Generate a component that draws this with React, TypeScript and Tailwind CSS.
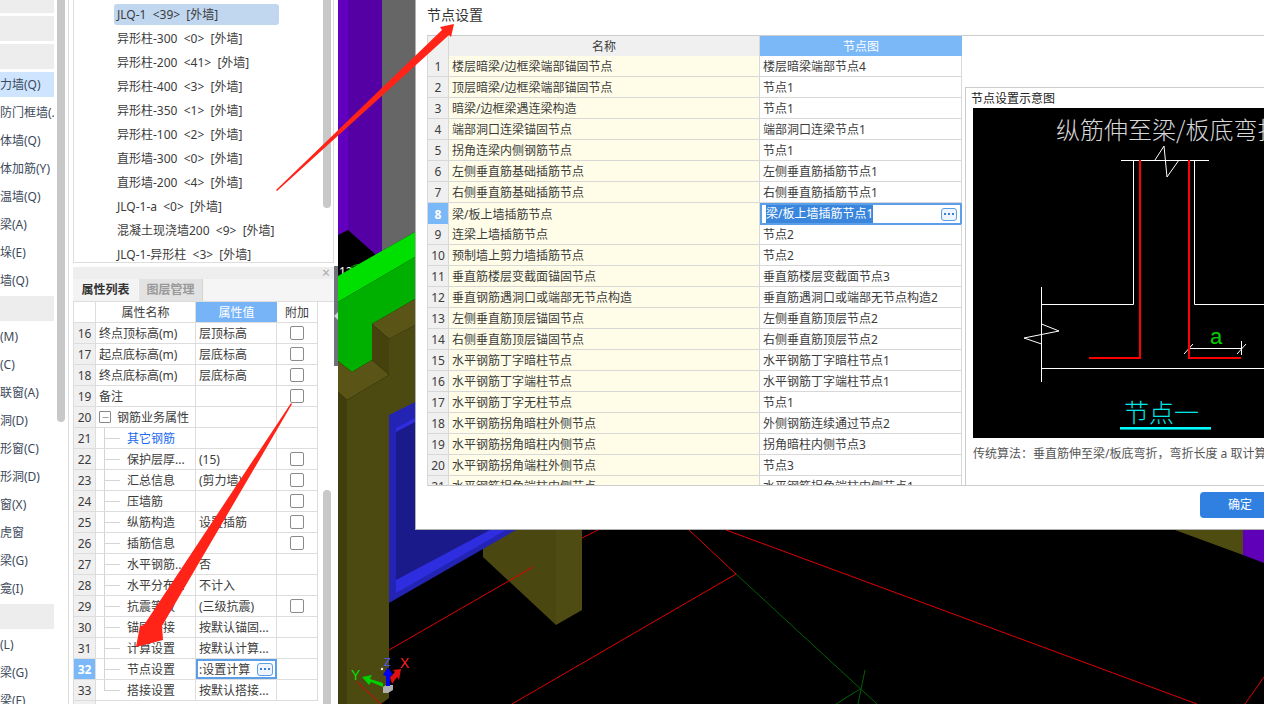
import { Minus } from "lucide-react"

const sideRows = [
  { head: true },
  { head: true },
  { head: true },
  { label: "剪力墙(Q)", active: true },
  { label: "人防门框墙(..." },
  { label: "砌体墙(Q)" },
  { label: "砌体加筋(Y)" },
  { label: "保温墙(Q)" },
  { label: "连梁(A)" },
  { label: "墙垛(E)" },
  { label: "幕墙(Q)" },
  { head: true },
  { label: "门(M)" },
  { label: "窗(C)" },
  { label: "门联窗(A)" },
  { label: "墙洞(D)" },
  { label: "带形窗(C)" },
  { label: "带形洞(D)" },
  { label: "飘窗(X)" },
  { label: "老虎窗" },
  { label: "过梁(G)" },
  { label: "壁龛(I)" },
  { head: true },
  { label: "梁(L)" },
  { label: "连梁(G)" },
  { label: "圈梁(F)" },
]

const wallRows = [
  "JLQ-1  <39>  [外墙]",
  "异形柱-300  <0>  [外墙]",
  "异形柱-200  <41>  [外墙]",
  "异形柱-400  <3>  [外墙]",
  "异形柱-350  <1>  [外墙]",
  "异形柱-100  <2>  [外墙]",
  "直形墙-300  <0>  [外墙]",
  "直形墙-200  <4>  [外墙]",
  "JLQ-1-a  <0>  [外墙]",
  "混凝土现浇墙200  <9>  [外墙]",
  "JLQ-1-异形柱  <3>  [外墙]",
]

// tree: 0 = top level, 1 = group row, 2 = child, 3 = last child
const propRows = [
  { no: 16, name: "终点顶标高(m)", value: "层顶标高", check: true, tree: 0 },
  { no: 17, name: "起点底标高(m)", value: "层底标高", check: true, tree: 0 },
  { no: 18, name: "终点底标高(m)", value: "层底标高", check: true, tree: 0 },
  { no: 19, name: "备注", value: "", check: true, tree: 0 },
  { no: 20, name: "钢筋业务属性", value: "", check: false, tree: 1 },
  { no: 21, name: "其它钢筋", value: "", check: false, tree: 2 },
  { no: 22, name: "保护层厚...", value: "(15)", check: true, tree: 2 },
  { no: 23, name: "汇总信息", value: "(剪力墙)", check: true, tree: 2 },
  { no: 24, name: "压墙筋", value: "", check: true, tree: 2 },
  { no: 25, name: "纵筋构造", value: "设置插筋", check: true, tree: 2 },
  { no: 26, name: "插筋信息", value: "", check: true, tree: 2 },
  { no: 27, name: "水平钢筋...", value: "否", check: false, tree: 2 },
  { no: 28, name: "水平分布...", value: "不计入", check: false, tree: 2 },
  { no: 29, name: "抗震等级", value: "(三级抗震)", check: true, tree: 2 },
  { no: 30, name: "锚固搭接", value: "按默认锚固...", check: false, tree: 2 },
  { no: 31, name: "计算设置", value: "按默认计算...", check: false, tree: 2 },
  { no: 32, name: "节点设置", value: "", check: false, tree: 2 },
  { no: 33, name: "搭接设置", value: "按默认搭接...", check: false, tree: 3 },
]

const nodeRows = [
  ["楼层暗梁/边框梁端部锚固节点", "楼层暗梁端部节点4"],
  ["顶层暗梁/边框梁端部锚固节点", "节点1"],
  ["暗梁/边框梁遇连梁构造", "节点1"],
  ["端部洞口连梁锚固节点", "端部洞口连梁节点1"],
  ["拐角连梁内侧钢筋节点", "节点1"],
  ["左侧垂直筋基础插筋节点", "左侧垂直筋插筋节点1"],
  ["右侧垂直筋基础插筋节点", "右侧垂直筋插筋节点1"],
  ["梁/板上墙插筋节点", "梁/板上墙插筋节点1"],
  ["连梁上墙插筋节点", "节点2"],
  ["预制墙上剪力墙插筋节点", "节点2"],
  ["垂直筋楼层变截面锚固节点", "垂直筋楼层变截面节点3"],
  ["垂直钢筋遇洞口或端部无节点构造", "垂直筋遇洞口或端部无节点构造2"],
  ["左侧垂直筋顶层锚固节点", "左侧垂直筋顶层节点2"],
  ["右侧垂直筋顶层锚固节点", "右侧垂直筋顶层节点2"],
  ["水平钢筋丁字暗柱节点", "水平钢筋丁字暗柱节点1"],
  ["水平钢筋丁字端柱节点", "水平钢筋丁字端柱节点1"],
  ["水平钢筋丁字无柱节点", "节点1"],
  ["水平钢筋拐角暗柱外侧节点", "外侧钢筋连续通过节点2"],
  ["水平钢筋拐角暗柱内侧节点", "拐角暗柱内侧节点3"],
  ["水平钢筋拐角端柱外侧节点", "节点3"],
  ["水平钢筋拐角端柱内侧节点", "水平钢筋拐角端柱内侧节点1"],
]

function DotsButton() {
  return (
    <span className="flex h-[13px] w-[16px] shrink-0 items-center justify-center gap-[2px] rounded-[3px] border border-[#5a9fe8] bg-[#eef5ff]">
      <i className="h-[2px] w-[2px] bg-[#3a80d0]" />
      <i className="h-[2px] w-[2px] bg-[#3a80d0]" />
      <i className="h-[2px] w-[2px] bg-[#3a80d0]" />
    </span>
  )
}

function Sidebar() {
  return (
    <div className="flex h-full w-[73px] shrink-0">
      <div className="-mt-[12px] w-[54px] shrink-0">
        {sideRows.map((row, i) => (
          <div
            key={i}
            className={`mb-[3px] flex h-[25px] items-center overflow-hidden whitespace-nowrap ${
              row.head ? "bg-[#ededed]" : row.active ? "bg-[#cfe5ff]" : ""
            }`}
          >
            {row.label && <span className="-ml-3 text-[#3d4a5c]">{row.label}</span>}
          </div>
        ))}
      </div>
      <div className="ml-[3px] h-[422px] w-[8px] shrink-0 rounded-b-[4px] bg-[#c8c8c8]" />
      <div className="ml-[3px] h-full w-px bg-[#dcdcdc]" />
    </div>
  )
}

function WallList() {
  return (
    <div className="flex h-[263px] justify-between overflow-hidden border border-t-0 border-[#dddddd] pt-[2px]">
      <div className="pl-[40px]">
        {wallRows.map((row, i) => (
          <div key={row} className="flex h-[24px] w-[165px] items-center">
            <span
              className={`flex h-[21px] w-full items-center whitespace-pre rounded-[3px] pl-[3px] pt-[2px] ${
                i === 0 ? "bg-[#c0d7ef]" : ""
              }`}
            >
              {row}
            </span>
          </div>
        ))}
      </div>
      <div className="mr-[2px] -mt-[2px] h-[208px] w-[8px] rounded-b-[4px] bg-[#c8c8c8]" />
    </div>
  )
}

function TreeCell({ name, tree }: { name: string; tree: number }) {
  if (tree === 0) return <span className="translate-y-px pl-[3px]">{name}</span>
  if (tree === 1) {
    return (
      <span className="flex h-full items-center pl-[3px]">
        <span className="flex h-[12px] w-[12px] items-center justify-center rounded-[1px] border border-[#888888]">
          <Minus size={9} strokeWidth={1.5} color="#555555" />
        </span>
        <span className="ml-[6px] translate-y-px">{name}</span>
      </span>
    )
  }
  return (
    <span className="flex h-full items-start pl-[8px]">
      {tree === 3 ? (
        <span className="h-[11px] w-[16px] border-b border-l border-[#d4d4d4]" />
      ) : (
        <span className="flex h-full w-[16px] items-center border-l border-[#d4d4d4]">
          <span className="h-px w-full bg-[#d4d4d4]" />
        </span>
      )}
      <span className={`ml-[7px] translate-y-px self-center ${name === "其它钢筋" ? "text-[#1a6af0]" : ""}`}>
        {name}
      </span>
    </span>
  )
}

function PropertyPanel() {
  return (
    <div className="mt-[4px] flex h-[437px] flex-col overflow-hidden bg-white">
      <div className="flex h-[12px] shrink-0 items-center justify-end bg-[#eeeeee] pr-[4px] text-[14px] leading-none text-[#aaaaaa]">
        ×
      </div>
      <div className="flex h-[23px] shrink-0 border-b border-[#dddddd] bg-[#f5f5f5] font-bold">
        <div className="flex w-[65px] items-center justify-center bg-[#f3f3f3] text-[#333333]">属性列表</div>
        <div className="ml-px flex w-[64px] items-center justify-center border-r border-[#d4d4d4] bg-[#e2e2e2] text-[#999999]">
          图层管理
        </div>
      </div>
      <div className="flex min-h-0 flex-1 justify-between">
        <div className="w-[245px] shrink-0 border-l border-[#dddddd]">
          <div className="grid h-[21px] grid-cols-[22px_100px_81px_41px] border-b border-[#dddddd]">
            <div className="border-r border-[#dddddd]" />
            <div className="flex items-center justify-center border-r border-[#dddddd] pt-[2px]">属性名称</div>
            <div className="flex items-center justify-center bg-[#76b3f7] pt-[2px] text-white">属性值</div>
            <div className="flex items-center justify-center border-r border-[#dddddd] pt-[2px]">附加</div>
          </div>
          {propRows.map((row) => {
            const editing = row.no === 32
            return (
              <div
                key={row.no}
                className="grid h-[21px] grid-cols-[22px_100px_81px_41px] items-center border-b border-[#dddddd]"
              >
                <div
                  className={`flex h-full items-center justify-center border-r border-[#dddddd] pt-[2px] ${
                    editing ? "bg-[#7ab8f8] font-bold text-white" : "bg-[#f0f0f0]"
                  }`}
                >
                  {row.no}
                </div>
                <div className="flex h-full items-center overflow-hidden whitespace-nowrap border-r border-[#dddddd]">
                  <TreeCell name={row.name} tree={row.tree} />
                </div>
                {editing ? (
                  <div className="flex h-full items-center justify-between overflow-hidden whitespace-nowrap border-2 border-[#5a9fe8] pl-px pr-[2px]">
                    <span className="translate-y-px">:设置计算</span>
                    <DotsButton />
                  </div>
                ) : (
                  <div className="flex h-full items-center overflow-hidden whitespace-nowrap border-r border-[#dddddd] pl-[3px] pt-[2px]">
                    {row.value}
                  </div>
                )}
                <div className="flex h-full items-center justify-center border-r border-[#dddddd]">
                  {row.check && <span className="h-[14px] w-[14px] rounded-[2px] border border-[#8a8a8a] bg-white" />}
                </div>
              </div>
            )
          })}
          <div className="grid h-[21px] grid-cols-[22px_100px_81px_41px]">
            <div className="border-r border-[#dddddd] bg-[#f0f0f0]" />
          </div>
        </div>
        <div className="mr-[3px] mt-[188px] h-[214px] w-[8px] shrink-0 rounded-t-[4px] bg-[#c8c8c8]" />
      </div>
    </div>
  )
}

function Scene() {
  return (
    <svg viewBox="338 0 926 704" className="h-full w-full bg-black">
      {/* column tops */}
      <polygon points="338,0 348,0 348,230 338,235" fill="#6200c0" />
      <polygon points="348,0 382,0 382,254 375,254 348,230" fill="#5500a5" />
      <polygon points="382,0 415,0 415,232 382,251" fill="#666666" />
      <polygon points="375,254 382,251 375,258" fill="#5500a5" />
      <text x="339" y="276" fill="#ffffff" fontSize="12" fontFamily="Noto Sans">
        12
      </text>
      <path d="M349 269 Q356 262 364 266" stroke="#00a000" fill="none" />
      {/* green beam */}
      <polygon points="338,276 415,232 415,257 338,302" fill="#00e000" />
      <polygon points="338,302 415,257 415,299 372,324 372,360 352,372 338,361" fill="#00b000" />
      {/* olive */}
      <polygon points="389,339 415,325 415,530 389,530" fill="#4c4a10" />
      <polygon points="372,324 415,299 415,325 389,339" fill="#5a5516" />
      <polygon points="372,324 389,339 389,375 372,360" fill="#45420e" />
      <polygon points="338,361 352,372 372,360 389,375 347,400 338,392" fill="#5a5516" />
      <polygon points="347,400 389,375 389,698 381,704 347,704" fill="#4c4a10" />
      <polygon points="338,392 347,400 347,704 338,704" fill="#403e0d" />
      {/* post under the dialog */}
      <polygon points="483,530 556,530 556,625 483,557" fill="#4a4710" />
      <polygon points="556,530 582,530 582,610 556,625" fill="#4e4c12" />
      {/* blue panel */}
      <polygon points="389,415 415,402 415,530 516,530 389,603" fill="#2424b4" />
      <polygon points="396,428 415,418 415,530 506,530 396,593" fill="#2e2ee0" />
      <polygon points="396,432 415,422 415,530 490,530 396,580" fill="#1a1a8a" />
      <polygon points="1175,530 1243,530 1243,555" fill="#4e4c10" />
      <polygon points="1243,530 1264,530 1264,563 1243,555" fill="#5f00b8" />
      {/* red grid */}
      <g stroke="#e00000" strokeWidth="1" fill="none">
        <line x1="389" y1="650" x2="533" y2="567" />
        <line x1="582" y1="538" x2="598" y2="530" />
        <line x1="689" y1="530" x2="736" y2="574" />
        <line x1="736" y1="574" x2="512" y2="704" />
        <line x1="726" y1="530" x2="1197" y2="704" />
        <line x1="1245" y1="704" x2="1264" y2="677" />
        <line x1="357" y1="682" x2="381" y2="704" />
      </g>
      {/* green grid */}
      <g stroke="#006000" strokeWidth="1" fill="none">
        <line x1="736" y1="574" x2="877" y2="704" />
        <line x1="865" y1="670" x2="858" y2="704" />
        <line x1="860" y1="689" x2="836" y2="704" />
      </g>
      {/* axis widget */}
      <polygon points="383,687 386,685 393,685 393,690 388,693 383,693" fill="#b0b0b0" />
      <polygon points="383,683 370,679 372,675 362,677 369,685 371,682 383,687" fill="#00d000" />
      <polygon points="390,677 395,672 393,670 401,669 399,680 397,677 392,684" fill="#e01010" />
      <polygon points="388,667 393,675 390,676 390,686 386,686 386,676 383,675" fill="#0000f0" />
      <circle cx="382" cy="669" r="1.2" fill="#e8e8e8" />
      <text x="384" y="666" fill="#4a5cff" fontSize="11" fontFamily="Liberation Sans">
        Z
      </text>
      <text x="400" y="668" fill="#ff2020" fontSize="14" fontFamily="Liberation Sans">
        X
      </text>
      <text x="351" y="680" fill="#00e000" fontSize="14" fontFamily="Liberation Sans">
        Y
      </text>
    </svg>
  )
}

function NodeDiagram() {
  return (
    <svg viewBox="0 0 291 330" className="h-[330px] w-[291px] shrink-0 bg-black">
      <text x="83" y="31" fill="#d8d8d8" fontSize="24" fontWeight="300" fontFamily="Noto Sans CJK SC">
        纵筋伸至梁/板底弯折
      </text>
      <g stroke="#ffffff" strokeWidth="1" fill="none">
        <path d="M148 52.5H236" />
        <path d="M160.5 52V196.5H68.5" />
        <path d="M221.5 52V196.5H291" />
        <path d="M68.5 179V274" />
        <path d="M68.5 260.5H291" />
        <path d="M182 52L191 38L194 69L206 52" />
        <path d="M68.5 216L86 223L51 230L68.5 236" />
        <path d="M216 240.5H269" />
        <path d="M211 246L220 236" />
        <path d="M264 246L273 236" />
        <path d="M268.5 233V247" />
      </g>
      <g stroke="#ff0000" strokeWidth="2" fill="none">
        <path d="M167 52V250H116" />
        <path d="M216 52V250H268" />
      </g>
      <text x="237" y="236" fill="#00d000" fontSize="22" fontFamily="Liberation Sans">
        a
      </text>
      <text x="151" y="314" fill="#00e8e8" fontSize="25" fontWeight="300" fontFamily="Noto Sans CJK SC">
        节点一
      </text>
      <rect x="147" y="319" width="91" height="2.6" fill="#00ffff" />
    </svg>
  )
}

function NodeDialog() {
  return (
    <div className="absolute left-[415px] top-0 flex h-[530px] w-[849px] flex-col overflow-hidden border-b border-l border-[#b0b0b0] bg-white pl-[11px]">
      <div className="flex h-[35px] shrink-0 items-center pb-[7px] text-[14px] text-[#333333]">节点设置</div>
      <div className="flex h-[451px] shrink-0 overflow-hidden border-b border-t border-[#cccccc]">
        <div className="w-[535px] shrink-0 border-l border-[#d8d8d8]">
          <div className="grid h-[20px] grid-cols-[21px_311px_202px] border-b border-[#d8d8d8]">
            <div className="border-r border-[#d8d8d8] bg-[#f0f0f0]" />
            <div className="flex items-center justify-center border-r border-[#d8d8d8] bg-[#f0f0f0] pt-[2px]">名称</div>
            <div className="flex items-center justify-center bg-[#7ab8f8] pt-[2px] text-white">节点图</div>
          </div>
          {nodeRows.map(([name, value], i) => {
            const editing = i === 7
            return (
              <div key={name} className="grid h-[21px] grid-cols-[21px_311px_202px] border-b border-[#d8d8d8]">
                <div
                  className={`flex items-center justify-center border-r border-[#d8d8d8] pt-[2px] ${
                    editing ? "bg-[#7ab8f8] font-bold text-white" : "bg-[#f0f0f0]"
                  }`}
                >
                  {i + 1}
                </div>
                <div className="flex items-center border-r border-[#d8d8d8] bg-[#fffde8] pl-[3px] pt-[2px]">{name}</div>
                {editing ? (
                  <div className="flex items-center justify-between border-2 border-[#5a9fe8] pl-[4px] pr-[3px]">
                    <span className="bg-[#3a86dc] text-white">{value}</span>
                    <DotsButton />
                  </div>
                ) : (
                  <div className="flex items-center border-r border-[#d8d8d8] pl-[3px] pt-[2px]">{value}</div>
                )}
              </div>
            )
          })}
        </div>
        <div className="flex-1 pl-[3px] pt-[51px]">
          <div className="h-[399px] border-l border-t border-[#cccccc] pl-[7px]">
            <div className="-ml-[2px] flex h-[20px] items-end text-[#222222]">节点设置示意图</div>
            <NodeDiagram />
            <div className="mt-[7px] whitespace-nowrap text-[#555555]">
              传统算法：垂直筋伸至梁/板底弯折，弯折长度 a 取计算设置值
            </div>
          </div>
        </div>
      </div>
      <div className="flex pl-[773px] pt-[6px]">
        <div className="flex h-[26px] w-[80px] shrink-0 items-center justify-center rounded-[4px] bg-[#2f80e0] text-white">
          确定
        </div>
      </div>
    </div>
  )
}

function RedArrows() {
  return (
    <svg viewBox="0 0 1264 704" className="pointer-events-none absolute left-0 top-0 h-[704px] w-[1264px]">
      <polygon points="276,190 442,30 440,27 454,24 451,37 449,35 277,191" fill="#ff2318" />
      <polygon points="291,403 292,404 162,626 163,640 136,647 140,626 144,625" fill="#ff2318" />
    </svg>
  )
}

export default function App() {
  return (
    <div className="relative flex h-[704px] w-[1264px] overflow-hidden bg-white font-['Noto_Sans','Noto_Sans_CJK_SC',sans-serif] text-[12px] text-[#3c3c3c]">
      <Sidebar />
      <div className="h-full w-[261px] shrink-0">
        <WallList />
        <PropertyPanel />
      </div>
      <div className="h-full w-[4px] shrink-0 pt-[266px]">
        <div className="flex h-[100px] items-center justify-center bg-[#6d7378]">
          <svg width="4" height="8" viewBox="0 0 4 8">
            <polygon points="4,0 4,8 0,4" fill="#d0d4d8" />
          </svg>
        </div>
      </div>
      <div className="h-full min-w-0 flex-1">
        <Scene />
      </div>
      <NodeDialog />
      <RedArrows />
    </div>
  )
}
